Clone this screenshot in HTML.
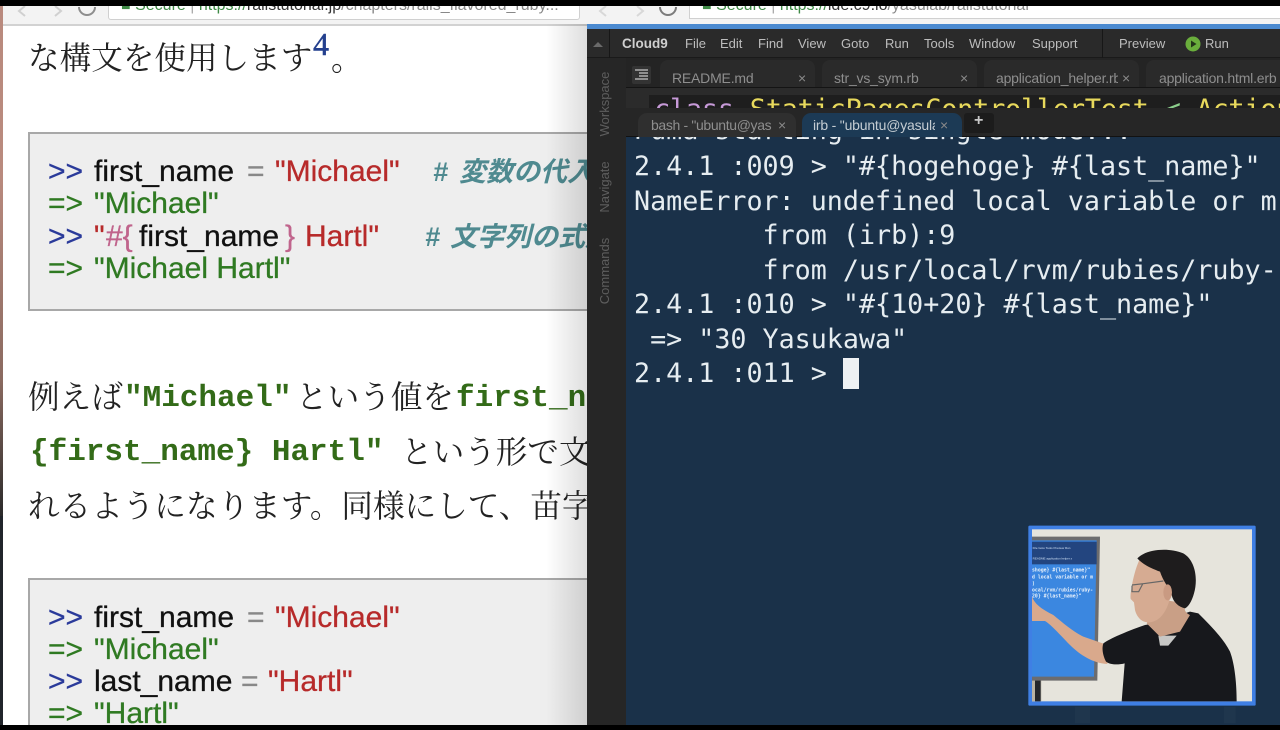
<!DOCTYPE html>
<html lang="ja"><head><meta charset="utf-8"><title>Rails Tutorial</title>
<style>
html,body{margin:0;padding:0;background:#000;}
#p{position:relative;width:1280px;height:730px;overflow:hidden;background:#000;font-family:"Liberation Sans","Noto Sans CJK JP",sans-serif;}
.a{position:absolute;white-space:pre;}
.b{position:absolute;}
.jp{font-family:"Liberation Serif","Noto Serif CJK SC","Noto Sans CJK JP",serif;color:#222;font-size:31.6px;line-height:40px;}
.c{position:absolute;white-space:pre;font-size:30px;line-height:32px;color:#111;-webkit-text-stroke:.3px currentColor;}
.blue{color:#2a3a9a}.gr{color:#2f7a22}.red{color:#b72a2a}.gy{color:#888}.pk{color:#c0648c}
.cm{position:absolute;white-space:pre;color:#4f8a90;font-style:italic;font-weight:bold;font-size:27px;line-height:32px;font-family:"Liberation Sans","Noto Sans CJK JP",sans-serif;}
.mono{font-family:"Liberation Mono",monospace;font-weight:bold;color:#336b18;font-size:31px;line-height:40px;}
.m{font-size:13px;color:#bdbdbd;line-height:16px;top:36px;}
.t{font-size:14px;color:#8e8e8e;line-height:18px;top:69px;letter-spacing:-0.2px;}
.x{font-size:14px;color:#8a8a8a;line-height:16px;}
.s{font-size:13px;color:#5e5e5e;line-height:14px;transform:rotate(-90deg);transform-origin:center;width:90px;text-align:center;}
.term{font-family:"DejaVu Sans Mono",monospace;font-size:26.7px;line-height:34px;color:#e6edf1;left:634px;transform-origin:0 0;}
</style></head><body><div id="p">

<!-- left browser -->
<div class="b" style="left:3px;top:6px;width:584px;height:719px;background:#fff;"></div>
<div class="b" style="left:0;top:6px;width:3px;height:170px;background:#b98a7e;"></div>
<div class="b" style="left:0;top:176px;width:3px;height:340px;background:linear-gradient(#b98a7e,#8a6a60 60%,#2a2a2a);"></div>
<div class="b" style="left:0;top:516px;width:3px;height:209px;background:#20242a;"></div>
<div class="b" style="left:3px;top:6px;width:584px;height:18px;background:#f3f3f3;border-bottom:2px solid #d2d2d2;"></div>
<svg class="b" style="left:3px;top:6px" width="584" height="18"><path d="M22 0L16 5L22 10M52 0L58 5L52 10" fill="none" stroke="#d0d0d0" stroke-width="2"/><path d="M76 1A8 8 0 0 0 92 1" fill="none" stroke="#8e8e8e" stroke-width="2"/></svg>
<div class="b" style="left:108px;top:6px;width:470px;height:13px;background:#fff;border:1px solid #d0d0d0;border-top:0;border-radius:0 0 3px 3px;overflow:hidden;">
<div class="a" style="left:12px;top:-9px;font-size:16px;line-height:18px;color:#3f8a46;">■ Secure <span style="color:#aaa">|</span> https://<span style="color:#333">railstutorial.jp</span><span style="color:#888">/chapters/rails_flavored_ruby...</span></div></div>

<div class="a jp" style="left:28px;top:39px;">な構文を使用します</div>
<div class="a" style="left:313px;top:24px;font-family:'Liberation Serif',serif;font-size:32px;line-height:40px;color:#24408e;-webkit-text-stroke:.5px #24408e;">4</div>
<div class="a jp" style="left:331px;top:40px;">。</div>

<div class="b" style="left:28px;top:132px;width:570px;height:179px;background:#eeeeee;border:2px solid #a8a8a8;box-sizing:border-box;"></div>
<div class="c blue" style="left:48px;top:156px;">&gt;&gt;</div>
<div class="c" style="left:94px;top:156px;">first_name</div>
<div class="c gy" style="left:247px;top:156px;">=</div>
<div class="c red" style="left:275px;top:156px;">"Michael"</div>
<div class="cm" style="left:433px;top:156px;">#</div>
<div class="cm" style="left:459px;top:156px;">変数の代入</div>
<div class="c gr" style="left:48px;top:188px;">=&gt;</div>
<div class="c gr" style="left:94px;top:188px;">"Michael"</div>
<div class="c blue" style="left:48px;top:221px;">&gt;&gt;</div>
<div class="c red" style="left:94px;top:221px;">"</div>
<div class="c pk" style="left:106px;top:221px;">#{</div>
<div class="c" style="left:139px;top:221px;">first_name</div>
<div class="c pk" style="left:285px;top:221px;">}</div>
<div class="c red" style="left:305px;top:221px;">Hartl"</div>
<div class="cm" style="left:425px;top:221px;">#</div>
<div class="cm" style="left:450px;top:221px;">文字列の式展開</div>
<div class="c gr" style="left:48px;top:253px;">=&gt;</div>
<div class="c gr" style="left:94px;top:253px;">"Michael Hartl"</div>

<div class="a jp" style="left:28px;top:378px;">例えば</div>
<div class="a mono" style="left:124px;top:379px;">"Michael"</div>
<div class="a jp" style="left:296px;top:378px;">という値を</div>
<div class="a mono" style="left:456px;top:379px;">first_name</div>
<div class="a mono" style="left:30px;top:433px;">{first_name} Hartl"</div>
<div class="a jp" style="left:401px;top:433px;">という形で文字列</div>
<div class="a jp" style="left:28px;top:487px;">れるようになります。同様にして、苗字</div>

<div class="b" style="left:28px;top:578px;width:570px;height:160px;background:#eeeeee;border:2px solid #a8a8a8;box-sizing:border-box;"></div>
<div class="c blue" style="left:48px;top:602px;">&gt;&gt;</div>
<div class="c" style="left:94px;top:602px;">first_name</div>
<div class="c gy" style="left:247px;top:602px;">=</div>
<div class="c red" style="left:275px;top:602px;">"Michael"</div>
<div class="c gr" style="left:48px;top:634px;">=&gt;</div>
<div class="c gr" style="left:94px;top:634px;">"Michael"</div>
<div class="c blue" style="left:48px;top:666px;">&gt;&gt;</div>
<div class="c" style="left:94px;top:666px;">last_name</div>
<div class="c gy" style="left:241px;top:666px;">=</div>
<div class="c red" style="left:268px;top:666px;">"Hartl"</div>
<div class="c gr" style="left:48px;top:698px;">=&gt;</div>
<div class="c gr" style="left:94px;top:698px;">"Hartl"</div>

<div class="b" style="left:546px;top:24px;width:41px;height:701px;background:linear-gradient(90deg,rgba(0,0,0,0),rgba(0,0,0,.13));"></div>

<!-- right browser chrome -->
<div class="b" style="left:587px;top:6px;width:693px;height:719px;background:#1a3149;"></div>
<div class="b" style="left:587px;top:6px;width:693px;height:18px;background:#f3f3f3;"></div>
<svg class="b" style="left:587px;top:6px" width="200" height="18"><path d="M19 0L13 5L19 10M50 0L56 5L50 10" fill="none" stroke="#d8d8d8" stroke-width="2"/><path d="M73 1A8 8 0 0 0 89 1" fill="none" stroke="#7c7c7c" stroke-width="2"/></svg>
<div class="b" style="left:689px;top:6px;width:591px;height:12px;background:#fff;border-left:1px solid #d0d0d0;border-bottom:1px solid #d0d0d0;overflow:hidden;">
<div class="a" style="left:12px;top:-9px;font-size:16px;line-height:18px;color:#3f8a46;">■ Secure <span style="color:#aaa">|</span> https://<span style="color:#333">ide.c9.io</span><span style="color:#888">/yasulab/railstutorial</span></div></div>
<div class="b" style="left:587px;top:24px;width:693px;height:5px;background:#4b8ad0;"></div>

<!-- c9 menu -->
<div class="b" style="left:587px;top:29px;width:693px;height:29px;background:#2a2a2a;border-bottom:1px solid #1a1a1a;box-sizing:border-box;"></div>
<div class="b" style="left:609px;top:29px;width:1px;height:29px;background:#171717;"></div>
<div class="b" style="left:1102px;top:29px;width:1px;height:29px;background:#171717;"></div>
<svg class="b" style="left:590px;top:40px" width="18" height="10"><path d="M3 7L8 2L13 7Z" fill="#6a6a6a"/></svg>
<div class="a m" style="left:622px;font-weight:bold;color:#cfcfcf;font-size:13.5px;">Cloud9</div>
<div class="a m" style="left:685px;">File</div>
<div class="a m" style="left:720px;">Edit</div>
<div class="a m" style="left:758px;">Find</div>
<div class="a m" style="left:798px;">View</div>
<div class="a m" style="left:841px;">Goto</div>
<div class="a m" style="left:885px;">Run</div>
<div class="a m" style="left:924px;">Tools</div>
<div class="a m" style="left:969px;">Window</div>
<div class="a m" style="left:1032px;">Support</div>
<div class="a m" style="left:1119px;">Preview</div>
<svg class="b" style="left:1185px;top:36px" width="16" height="16"><circle cx="8" cy="8" r="7.500" fill="#6aae3c"/><path d="M6 4.500L11.500 8L6 11.500Z" fill="#23361a"/></svg>
<div class="a m" style="left:1205px;">Run</div>

<!-- sidebar -->
<div class="b" style="left:587px;top:58px;width:39px;height:667px;background:#262626;"></div>
<div class="a s" style="left:560px;top:97px;">Workspace</div>
<div class="a s" style="left:560px;top:180px;">Navigate</div>
<div class="a s" style="left:560px;top:264px;">Commands</div>

<!-- file tabs -->
<div class="b" style="left:626px;top:58px;width:654px;height:30px;background:#242424;border-bottom:1px solid #141414;box-sizing:border-box;"></div>
<div class="b" style="left:632px;top:66px;width:19px;height:18px;background:#333;border-radius:2px;"></div>
<svg class="b" style="left:634px;top:68px" width="15" height="13"><path d="M1 2H14M5 5H14M5 8H14M1 11H14" stroke="#c8c8c8" stroke-width="1.300" fill="none"/></svg>
<div class="b" style="left:660px;top:60px;width:155px;height:27px;background:#2a2a2a;border-radius:8px 8px 0 0;"></div>
<div class="b" style="left:822px;top:60px;width:155px;height:27px;background:#2a2a2a;border-radius:8px 8px 0 0;"></div>
<div class="b" style="left:984px;top:60px;width:155px;height:27px;background:#2a2a2a;border-radius:8px 8px 0 0;"></div>
<div class="b" style="left:1146px;top:60px;width:134px;height:27px;background:#2a2a2a;border-radius:8px 0 0 0;"></div>
<div class="a t" style="left:672px;">README.md</div><div class="a x" style="left:798px;top:70px;">×</div>
<div class="a t" style="left:834px;">str_vs_sym.rb</div><div class="a x" style="left:960px;top:70px;">×</div>
<div class="a t" style="left:996px;width:122px;overflow:hidden;">application_helper.rb</div><div class="a x" style="left:1122px;top:70px;">×</div>
<div class="a t" style="left:1159px;">application.html.erb</div>

<!-- editor strip -->
<div class="b" style="left:626px;top:88px;width:654px;height:20px;background:#2b2b2b;overflow:hidden;">
<div class="b" style="left:23px;top:7px;width:631px;height:13px;background:#1e1e1e;"></div>
<div class="a" style="left:28px;top:6px;font-family:'DejaVu Sans Mono',monospace;font-size:27px;line-height:32px;letter-spacing:-0.3px;color:#e8d95c;"><span style="color:#c79ad8">class</span> StaticPagesControllerTest <span style="color:#8ccf8c">&lt;</span> Action</div>
</div>

<!-- terminal tabs -->
<div class="b" style="left:626px;top:108px;width:654px;height:29px;background:#262626;border-bottom:1px solid #121212;box-sizing:border-box;"></div>
<div class="b" style="left:638px;top:113px;width:158px;height:24px;background:#2f2f2f;border-radius:9px 9px 0 0;"></div>
<div class="b" style="left:802px;top:113px;width:160px;height:24px;background:#1c3a55;border-radius:9px 9px 0 0;"></div>
<div class="a t" style="left:651px;top:116px;color:#8e8e8e;letter-spacing:-0.35px;">bash - "ubuntu@yas</div><div class="a x" style="left:778px;top:117px;">×</div>
<div class="a t" style="left:813px;top:116px;width:122px;overflow:hidden;color:#c4ccd2;">irb - "ubuntu@yasulab</div><div class="a x" style="left:940px;top:117px;">×</div>
<div class="b" style="left:964px;top:113px;width:30px;height:20px;background:#1c1c1c;border-radius:3px;"></div>
<div class="a" style="left:974px;top:112px;font-size:16px;line-height:18px;color:#c8c8c8;font-weight:bold;">+</div>

<!-- terminal -->
<div class="b" style="left:626px;top:137px;width:654px;height:588px;background:#1a3149;overflow:hidden;">
<div class="a" style="left:8px;top:-23px;font-family:'DejaVu Sans Mono',monospace;font-size:26.7px;line-height:34px;color:#e6edf1;">Puma starting in single mode...</div>
</div>
<div class="a term" style="top:150px;">2.4.1 :009 &gt; "#{hogehoge} #{last_name}"</div>
<div class="a term" style="top:184.500px;width:644px;overflow:hidden;">NameError: undefined local variable or method</div>
<div class="a term" style="top:219px;">        from (irb):9</div>
<div class="a term" style="top:253.500px;width:644px;overflow:hidden;">        from /usr/local/rvm/rubies/ruby-2.4.1</div>
<div class="a term" style="top:288px;">2.4.1 :010 &gt; "#{10+20} #{last_name}"</div>
<div class="a term" style="top:322.500px;"> =&gt; "30 Yasukawa"</div>
<div class="a term" style="top:357px;">2.4.1 :011 &gt; </div>
<div class="b" style="left:843px;top:358px;width:16px;height:31px;background:#eef1f3;"></div>

<!-- presenter thumbnail -->
<svg class="b" style="left:1020px;top:515px" width="259" height="215" viewBox="0 0 777 645">
<rect x="25" y="32" width="682" height="540" rx="4" fill="#3f7fe4"/>
<rect x="36" y="43" width="660" height="516" fill="#e6e4dc"/>
<rect x="36" y="495" width="28" height="64" fill="#b9b3a4"/>
<rect x="45" y="495" width="17" height="64" fill="#23262b"/>
<path d="M36 65H240L232 497H36Z" fill="#6c6c6e"/>
<path d="M36 76H230L222 485H36Z" fill="#3b87e0"/>
<rect x="36" y="80" width="194" height="68" fill="#23457f"/>
<text x="38" y="102" font-family="Liberation Sans" font-size="9" fill="#cfe0f5">File  Goto  Tools   Preview   Run</text>
<text x="38" y="133" font-family="Liberation Sans" font-size="9" fill="#cfe0f5">README  application  helper  x</text>
<g font-family="DejaVu Sans Mono" font-size="14.500" fill="#e8f1fb" font-weight="bold">
<text x="36" y="170">shoge} #{last_name}"</text>
<text x="36" y="190">d local variable or m</text>
<text x="36" y="210">)</text>
<text x="36" y="230">ocal/rvm/rubies/ruby-</text>
<text x="36" y="248">20} #{last_name}"</text>
</g>
<path d="M36 245C45 270 70 285 100 300C130 325 160 350 190 365L262 390L262 447C220 445 180 420 150 390C120 360 95 330 75 318L36 318Z" fill="#d9a98c"/>
<path d="M305 559L314 445C295 450 270 450 258 440C248 420 245 400 250 385C270 370 330 345 375 330L405 325L510 290L535 295C570 330 610 370 630 410C645 450 650 510 650 559Z" fill="#17181c"/>
<path d="M415 362L470 362L445 392L420 392Z" fill="#c8c8c6"/>
<path d="M380 325C395 300 400 280 405 250L495 265C490 290 500 295 510 300L480 350L420 365Z" fill="#c99f86"/>
<path d="M358 135C345 165 340 190 336 210C334 225 330 240 332 252L342 262L345 285C350 305 365 325 390 322C420 318 440 290 450 250L445 170Z" fill="#d6ab92"/>
<path d="M352 130C375 105 440 95 490 115C525 135 535 190 522 235C515 260 505 275 495 280C475 275 460 262 455 240C445 215 430 200 420 170C395 160 370 150 352 130Z" fill="#1e1c1d"/>
<ellipse cx="443" cy="232" rx="13" ry="24" fill="#c99a82"/>
<path d="M336 210L370 206L430 198M336 212V230H356L368 207" fill="none" stroke="#666" stroke-width="3.500"/>
<rect x="165" y="575" width="45" height="50" fill="#1f364d"/>
<rect x="612" y="575" width="35" height="50" fill="#1f364d"/>
</svg>

<div class="b" style="left:0;top:0;width:1280px;height:6px;background:#000;"></div>
<div class="b" style="left:0;top:725px;width:1280px;height:5px;background:#000;"></div>
</div></body></html>
